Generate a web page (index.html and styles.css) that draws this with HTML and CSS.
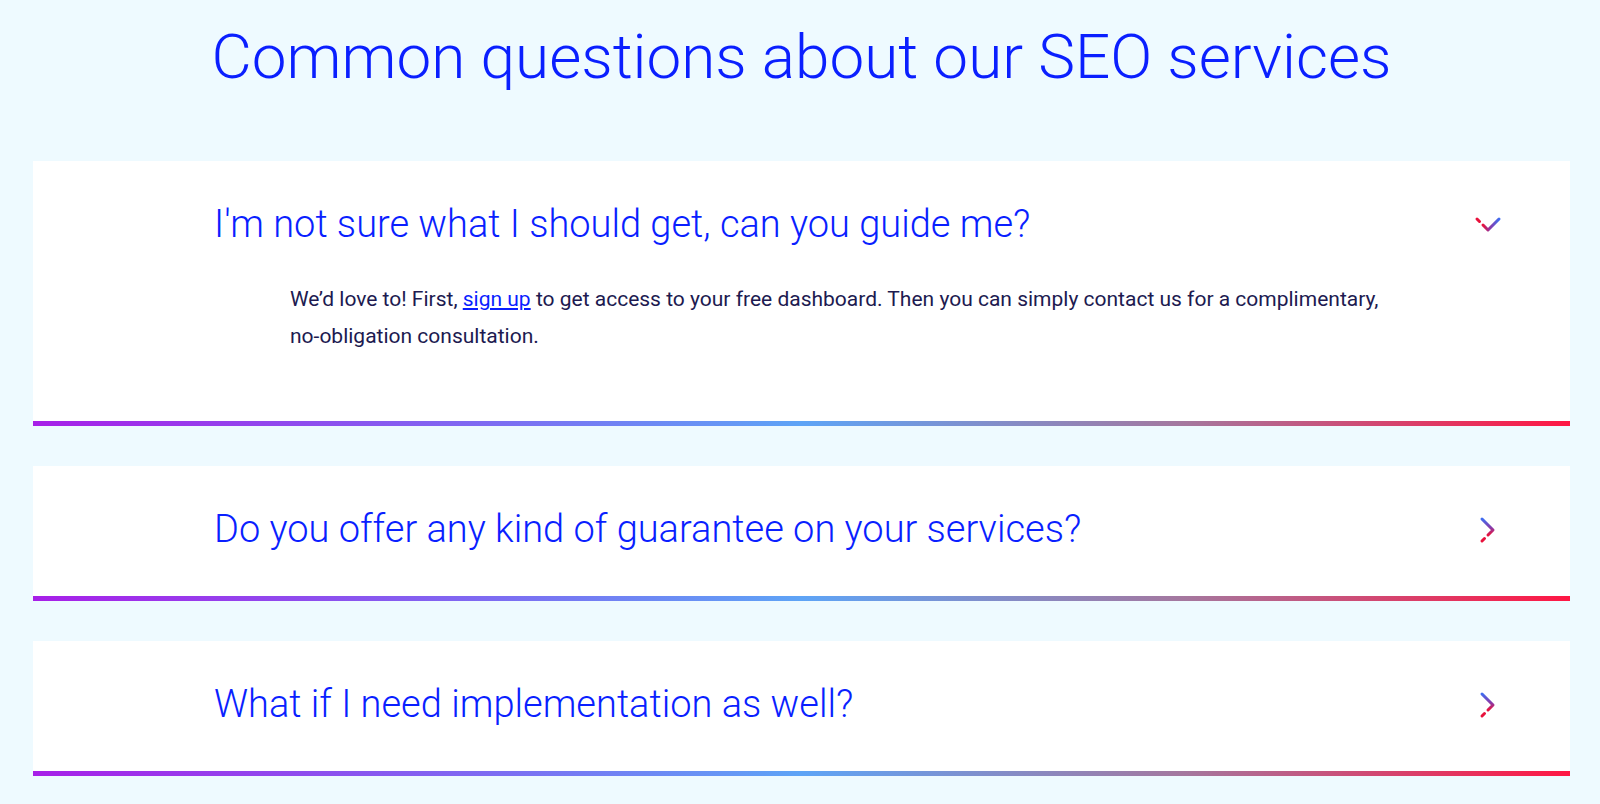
FILE: index.html
```html
<!DOCTYPE html>
<html lang="en">
<head>
<meta charset="utf-8">
<title>Common questions about our SEO services</title>
<link rel="stylesheet" href="styles.css">
</head>
<body>
<main class="faq">
  <h1 class="faq-title">Common questions about our SEO services</h1>
  <div class="faq-list">
    <section class="faq-item open">
      <div class="faq-head">
        <h2 class="faq-q">I'm not sure what I should get, can you guide me?</h2>
        <svg class="chev chev-down" width="28" height="18" viewBox="0 0 28 18">
          <defs>
            <linearGradient id="gd" x1="0" y1="0" x2="1" y2="0">
              <stop offset="0" stop-color="#e8123c"/>
              <stop offset="0.45" stop-color="#8a3aa8"/>
              <stop offset="1" stop-color="#3f6cf0"/>
            </linearGradient>
          </defs>
          <path d="M3 3 L5.5 5.5" stroke="#e8123c" stroke-width="3" stroke-linecap="round" fill="none"/>
          <path d="M9 9 L14 14 L25 3" stroke="url(#gd)" stroke-width="3" stroke-linecap="round" stroke-linejoin="round" fill="none"/>
        </svg>
      </div>
      <p class="faq-a">We’d love to! First, <a href="#">sign up</a> to get access to your free dashboard. Then you can simply contact us for a complimentary, <span class="nowrap">no-obligation</span> consultation.</p>
    </section>
    <section class="faq-item">
      <div class="faq-head">
        <h2 class="faq-q">Do you offer any kind of guarantee on your services?</h2>
        <svg class="chev chev-right" width="18" height="28" viewBox="0 0 18 28">
          <defs>
            <linearGradient id="gr1" x1="0" y1="0" x2="0" y2="1">
              <stop offset="0" stop-color="#3f6cf0"/>
              <stop offset="0.55" stop-color="#8a3aa8"/>
              <stop offset="1" stop-color="#e8123c"/>
            </linearGradient>
          </defs>
          <path d="M3 3 L14 14 L9 19" stroke="url(#gr1)" stroke-width="3" stroke-linecap="round" stroke-linejoin="round" fill="none"/>
          <path d="M5.5 22.5 L3 25" stroke="#e8123c" stroke-width="3" stroke-linecap="round" fill="none"/>
        </svg>
      </div>
    </section>
    <section class="faq-item">
      <div class="faq-head">
        <h2 class="faq-q">What if I need implementation as well?</h2>
        <svg class="chev chev-right" width="18" height="28" viewBox="0 0 18 28">
          <defs>
            <linearGradient id="gr2" x1="0" y1="0" x2="0" y2="1">
              <stop offset="0" stop-color="#3f6cf0"/>
              <stop offset="0.55" stop-color="#8a3aa8"/>
              <stop offset="1" stop-color="#e8123c"/>
            </linearGradient>
          </defs>
          <path d="M3 3 L14 14 L9 19" stroke="url(#gr2)" stroke-width="3" stroke-linecap="round" stroke-linejoin="round" fill="none"/>
          <path d="M5.5 22.5 L3 25" stroke="#e8123c" stroke-width="3" stroke-linecap="round" fill="none"/>
        </svg>
      </div>
    </section>
  </div>
</main>
</body>
</html>
```
FILE: styles.css
```css
html, body {
  margin: 0;
  padding: 0;
  background: #eefaff;
}
body {
  font-family: Roboto, "Liberation Sans", sans-serif;
  color: #1e1850;
}
.faq {
  padding: 20px 30px 0 33px;
}
.faq-title {
  margin: 0 0 67px;
  font-size: 62px;
  line-height: 1.2;
  font-weight: 300;
  color: #0a1fff;
  text-align: center;
}
.faq-list {
  display: flex;
  flex-direction: column;
  gap: 40px;
}
.faq-item {
  background: #ffffff;
  padding: 41px 70px 44px 181px;
  border-bottom: 5px solid transparent;
  border-image: linear-gradient(90deg, #a71fe8 0%, #7d6cf2 30%, #5ea4f6 50%, #a5779e 75%, #ff1744 100%) 1;
  border-image-slice: 0 0 1 0;
  border-image-width: 0 0 5px 0;
}
.faq-item.open {
  padding-bottom: 66px;
}
.faq-head {
  display: flex;
  align-items: center;
  justify-content: space-between;
}
.faq-q {
  margin: 0;
  font-size: 38px;
  line-height: 45px;
  font-weight: 300;
  color: #0a1fff;
}
.chev {
  display: block;
  flex: none;
}
.chev-down {
  margin-right: -2px;
}
.chev-right {
  margin-right: 3px;
}
.faq-a {
  margin: 34px 0 0 76px;
  max-width: 1130px;
  font-size: 21px;
  line-height: 37px;
  color: #201a50;
}
.faq-a a {
  color: #0a1fff;
  text-decoration: underline;
}
.nowrap {
  white-space: nowrap;
}
```
